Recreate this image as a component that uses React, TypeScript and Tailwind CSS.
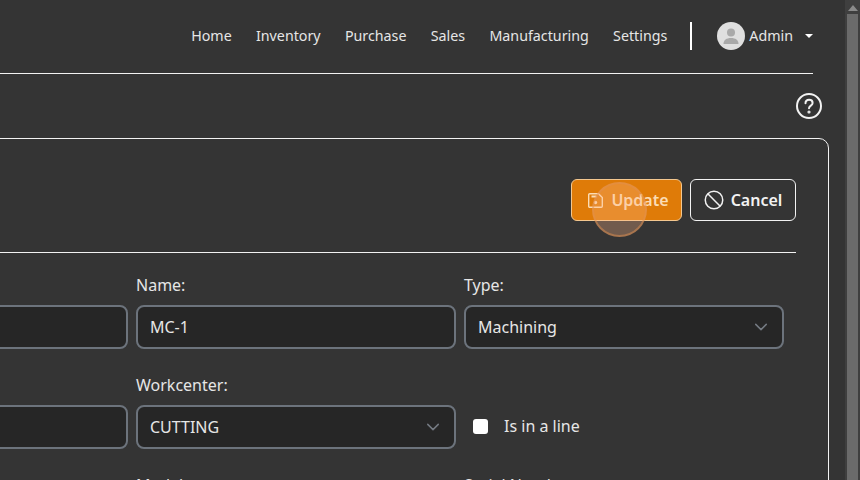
const navItems = ["Home", "Inventory", "Purchase", "Sales", "Manufacturing", "Settings"];

function Label({ text }: { text?: string }) {
  return <label className="block h-[24px] mb-[8px] text-[16px] leading-[24px] text-[#e6e6e6]">{text}</label>;
}

function Field({ value }: { value?: string }) {
  return (
    <div className="flex items-center h-[44px] px-[12px] rounded-[8px] border-2 border-[#6c737c] bg-[#262626] text-[16px] text-[#e6e6e6]">
      {value}
    </div>
  );
}

function Select({ value }: { value: string }) {
  return (
    <div className="flex items-center justify-between h-[44px] pl-[12px] pr-[14px] rounded-[8px] border-2 border-[#6c737c] bg-[#262626] text-[16px] text-[#e6e6e6]">
      {value}
      <svg width="14" height="14" viewBox="0 0 16 16" fill="none" stroke="#747a82" strokeWidth="1.7" strokeLinecap="round" strokeLinejoin="round">
        <path d="M2 5l6 6 6-6" />
      </svg>
    </div>
  );
}

export default function App() {
  return (
    <div className="flex h-[480px] w-[860px] overflow-hidden bg-[#343434] font-['Noto_Sans',sans-serif] text-[#e6e6e6]">
      <main className="relative flex flex-col items-end w-[845px] h-full overflow-hidden">
        {/* Top nav */}
        <nav className="flex shrink-0 items-center h-[73px] w-[1000px] mr-[32px] justify-end pb-[1px]">
          <div className="flex items-center gap-[24.3px] text-[14.25px] text-[#e6e6e6]">
            {navItems.map((item) => (
              <a key={item}>{item}</a>
            ))}
          </div>
          <div className="w-[2px] h-[28px] bg-white ml-[23px] mr-[25px]" />
          <div className="flex items-center justify-center w-[28px] h-[28px] rounded-full bg-[#dfdfdf] overflow-hidden">
            <svg width="20" height="20" viewBox="0 0 20 20" fill="#a9a9a9">
              <circle cx="10" cy="6.5" r="4" />
              <path d="M2.5 18c0-4 3-6 7.5-6s7.5 2 7.5 6z" />
            </svg>
          </div>
          <span className="ml-[4px] text-[14.25px]">Admin</span>
          <div className="ml-[12px] mb-[1px] w-0 h-0 border-x-[4px] border-x-transparent border-t-[4px] border-t-white" />
        </nav>
        <div className="shrink-0 h-px w-[1000px] mr-[32px] bg-[#f2f2f2]" />

        {/* Help */}
        <div className="flex shrink-0 justify-end w-[1000px] mr-[23px] mt-[19px] mb-[19px]">
          <svg width="26" height="26" viewBox="0 0 26 26" fill="none" stroke="#f2f2f2" strokeWidth="2">
            <circle cx="13" cy="13" r="12" />
            <path d="M9.5 10.2c0-2.2 1.6-3.5 3.6-3.5s3.5 1.3 3.5 3.2c0 2.6-3.6 2.8-3.6 5.4" strokeLinecap="round" />
            <circle cx="13" cy="19" r="0.6" fill="#f2f2f2" />
          </svg>
        </div>

        {/* Card */}
        <section className="shrink-0 w-[1100px] mr-[16px] rounded-[10px] border border-[#f2f2f2] pt-[40px] pr-[32px]">
          <div className="flex justify-end gap-[8px] pb-[31px] border-b border-[#f2f2f2]">
            <button className="flex items-center gap-[7px] h-[42px] w-[111px] pl-[3px] justify-center rounded-[6px] border border-[#f3c78f] bg-[#df7b08] text-[16px] font-semibold text-[#fbdcb4]">
              <svg width="17" height="17" viewBox="0 0 17 17" fill="none" stroke="#fbdcb4" strokeWidth="1.4">
                <path d="M1.7 2.7a1 1 0 0 1 1-1h8.8l3.8 3.8v8.8a1 1 0 0 1-1 1H2.7a1 1 0 0 1-1-1z" />
                <path d="M4.5 4.5h5" strokeWidth="2" />
                <circle cx="8.5" cy="10.5" r="1.7" fill="#fbdcb4" stroke="none" />
              </svg>
              Update
            </button>
            <button className="flex items-center gap-[7px] h-[42px] w-[106px] justify-center rounded-[6px] border border-[#f2f2f2] text-[16px] font-semibold text-[#f2f2f2]">
              <svg width="20" height="20" viewBox="0 0 20 20" fill="none" stroke="#f2f2f2" strokeWidth="1.5">
                <circle cx="10" cy="10" r="8.75" />
                <path d="M3.8 3.8l12.4 12.4" />
              </svg>
              Cancel
            </button>
          </div>

          <div className="grid grid-cols-[320px_320px_320px] gap-x-[8px] justify-end pr-[12px] pt-[20px]">
            <div className="mb-[24px]">
              <Label />
              <Field />
            </div>
            <div className="mb-[24px]">
              <Label text="Name:" />
              <Field value="MC-1" />
            </div>
            <div className="mb-[24px]">
              <Label text="Type:" />
              <Select value="Machining" />
            </div>
            <div className="mb-[24px]">
              <Label />
              <Field />
            </div>
            <div className="mb-[24px]">
              <Label text="Workcenter:" />
              <Select value="CUTTING" />
            </div>
            <div className="flex items-center h-[44px] mt-[31px] pl-[9px] gap-[16px]">
              <div className="w-[15px] h-[15px] rounded-[3px] bg-white" />
              <span className="text-[16px] text-[#e6e6e6]">Is in a line</span>
            </div>
            <div>
              <Label />
            </div>
            <div>
              <Label text="Model:" />
            </div>
            <div>
              <Label text="Serial Number:" />
            </div>
          </div>
        </section>

        {/* Click highlight */}
        <div className="absolute left-[592px] top-[182px] w-[55px] h-[55px] rounded-full border-2 border-[#e09050]/50 bg-[#ffb687]/30" />
      </main>

      {/* Scrollbar */}
      <aside className="flex flex-col items-center w-[15px] h-full bg-[#3f3f3f]">
        <div className="mt-[5px] mb-[3px] w-0 h-0 border-x-[5px] border-x-transparent border-b-[6px] border-b-[#8a8a8a]" />
        <div className="w-[11px] flex-1 bg-[#6b6b6b]" />
      </aside>
    </div>
  );
}
